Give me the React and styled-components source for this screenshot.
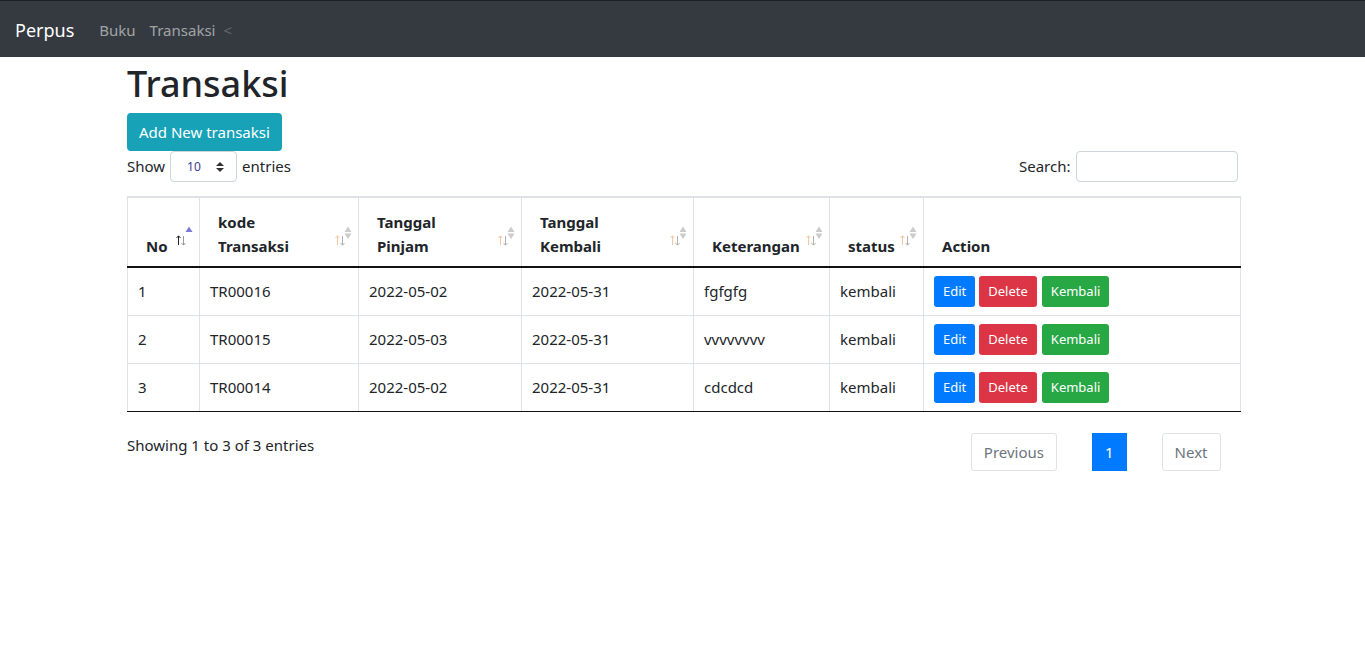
import React from "react";
import styled, { createGlobalStyle } from "styled-components";

const GlobalStyle = createGlobalStyle`
  * { box-sizing: border-box; }
  body {
    margin: 0;
    font-family: "Noto Sans", "Open Sans", sans-serif;
    font-size: 16px;
    line-height: 1.5;
    color: #212529;
    background: #fff;
  }
`;

const Navbar = styled.nav`
  height: 57px;
  background: #343a40;
  border-top: 1px solid #1d2124;
  display: flex;
  align-items: center;
  padding: 3px 16px 0 15px;
`;

const Brand = styled.span`
  color: #fff;
  font-size: 18px;
  margin-right: 25px;
`;

const NavLink = styled.span`
  color: ${(p) => (p.$dim ? "rgba(255,255,255,0.25)" : "rgba(255,255,255,0.55)")};
  font-size: 15px;
  margin-right: ${(p) => p.$gap || 0}px;
`;

const Container = styled.main`
  max-width: 1140px;
  margin: 0 auto;
  padding: 0 15px 0 14.5px;
`;

const Title = styled.h1`
  margin: 5px 0 8px;
  font-size: 36px;
  font-weight: 500;
  line-height: 1.2;
`;

const Button = styled.button`
  border: none;
  border-radius: ${(p) => (p.$sm ? "3px" : "4px")};
  color: #fff;
  background: ${(p) => p.$bg};
  font-family: inherit;
  font-size: ${(p) => (p.$sm ? "13px" : "15px")};
  line-height: 1.5;
  padding: ${(p) => (p.$sm ? "5px 9px" : "6px 12px")};
  height: ${(p) => (p.$sm ? "31px" : "38px")};
`;

const Toolbar = styled.div`
  display: flex;
  justify-content: space-between;
  align-items: center;
  font-size: 15px;
`;

const Label = styled.label`
  display: flex;
  align-items: center;
  gap: 5px;
`;

const FakeSelect = styled.div`
  width: 67px;
  height: 31px;
  border: 1px solid #ced4da;
  border-radius: 4px;
  display: flex;
  align-items: center;
  justify-content: space-between;
  padding: 0 12px 0 16px;
  font-size: 12px;
  color: #3b3b8f;
`;

const SearchInput = styled.div`
  width: 162px;
  height: 31px;
  border: 1px solid #ced4da;
  border-radius: 4px;
`;

const Table = styled.table`
  width: calc(100% + 3px);
  border-collapse: collapse;
  margin-top: 14px;
  border: 1px solid #dee2e6;
`;

const Th = styled.th`
  position: relative;
  text-align: left;
  vertical-align: bottom;
  font-size: 15px;
  font-weight: 700;
  line-height: 24px;
  padding: 12px 28px 8px 18px;
  border: 1px solid #dee2e6;
  border-top: 2px solid #dee2e6;
  border-bottom: 2px solid #111;
  width: ${(p) => p.$w}px;
`;

const SortMark = styled.span`
  position: absolute;
  right: 6px;
  bottom: 18px;
  display: flex;
  align-items: flex-end;
`;

const Td = styled.td`
  padding: 8px 10px;
  height: 48px;
  vertical-align: middle;
  border: 1px solid #dee2e6;
  font-size: 15px;
  tr:last-child > & { border-bottom: 1px solid #111; }
`;

const Actions = styled.div`
  display: flex;
  gap: 4px;
  & > button:last-child { margin-left: 1px; }
`;

const Footer = styled.div`
  display: flex;
  justify-content: space-between;
  align-items: flex-start;
  margin-top: 21px;
  font-size: 15px;
`;

const Info = styled.div`
  margin-top: 1px;
`;

const Pager = styled.div`
  display: flex;
  gap: 35px;
  margin-right: 17px;
`;

const PageLink = styled.span`
  height: 38px;
  display: flex;
  align-items: center;
  padding: 0 12px;
  font-size: 15px;
  border: 1px solid ${(p) => (p.$active ? "#007bff" : "#dee2e6")};
  border-radius: ${(p) => (p.$active ? "0" : "3px")};
  background: ${(p) => (p.$active ? "#007bff" : "#fff")};
  color: ${(p) => (p.$active ? "#fff" : "#6c757d")};
`;

function SortIcon({ active }) {
  return (
    <svg width="18" height="22" viewBox="0 0 18 22">
      <g strokeWidth="1" fill="none">
        <path d="M3.5 19V10M1.5 12l2-2.2 2 2.2" stroke={active ? "#222" : "#f2c6a0"} />
        <path d="M8.5 10v9M6.5 17l2 2.2 2-2.2" stroke={active ? "#999" : "#b0b0b0"} />
      </g>
      <path d="M10.5 6L14 0.5L17.5 6Z" fill={active ? "#7b7bd8" : "#ccc"} />
      {!active && <path d="M10.5 7.5L14 13L17.5 7.5Z" fill="#ccc" />}
    </svg>
  );
}

const headers = [
  { label: "No", w: 72, active: true },
  { label: <>kode<br />Transaksi</>, w: 159 },
  { label: <>Tanggal<br />Pinjam</>, w: 163 },
  { label: <>Tanggal<br />Kembali</>, w: 172 },
  { label: "Keterangan", w: 136 },
  { label: "status", w: 94 },
  { label: "Action", noSort: true },
];

const rows = [
  ["1", "TR00016", "2022-05-02", "2022-05-31", "fgfgfg", "kembali"],
  ["2", "TR00015", "2022-05-03", "2022-05-31", "vvvvvvvv", "kembali"],
  ["3", "TR00014", "2022-05-02", "2022-05-31", "cdcdcd", "kembali"],
];

export default function App() {
  return (
    <>
      <GlobalStyle />
      <Navbar>
        <Brand>Perpus</Brand>
        <NavLink $gap={14}>Buku</NavLink>
        <NavLink $gap={8}>Transaksi</NavLink>
        <NavLink $dim>&lt;</NavLink>
      </Navbar>
      <Container>
        <Title>Transaksi</Title>
        <Button $bg="#17a2b8">Add New transaksi</Button>
        <Toolbar>
          <Label>
            Show
            <FakeSelect>
              10
              <svg width="8" height="12" viewBox="0 0 8 12">
                <path d="M0 5L4 1L8 5Z M0 7L4 11L8 7Z" fill="#333" />
              </svg>
            </FakeSelect>
            entries
          </Label>
          <Label>
            Search:
            <SearchInput />
          </Label>
        </Toolbar>
        <Table>
          <thead>
            <tr>
              {headers.map((h, i) => (
                <Th key={i} $w={h.w}>
                  {h.label}
                  {!h.noSort && (
                    <SortMark>
                      <SortIcon active={h.active} />
                    </SortMark>
                  )}
                </Th>
              ))}
            </tr>
          </thead>
          <tbody>
            {rows.map((r) => (
              <tr key={r[0]}>
                {r.map((c, i) => (
                  <Td key={i}>{c}</Td>
                ))}
                <Td>
                  <Actions>
                    <Button $sm $bg="#007bff">Edit</Button>
                    <Button $sm $bg="#dc3545">Delete</Button>
                    <Button $sm $bg="#28a745">Kembali</Button>
                  </Actions>
                </Td>
              </tr>
            ))}
          </tbody>
        </Table>
        <Footer>
          <Info>Showing 1 to 3 of 3 entries</Info>
          <Pager>
            <PageLink>Previous</PageLink>
            <PageLink $active>1</PageLink>
            <PageLink>Next</PageLink>
          </Pager>
        </Footer>
      </Container>
    </>
  );
}
